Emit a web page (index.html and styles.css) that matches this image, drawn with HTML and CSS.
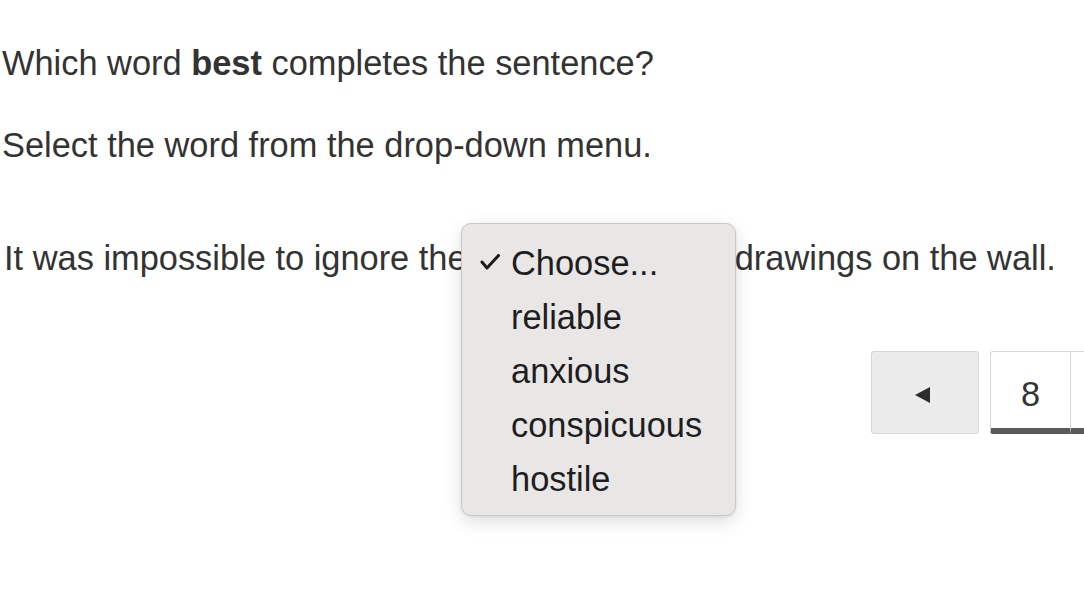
FILE: index.html
```html
<!DOCTYPE html>
<html lang="en">
<head>
<meta charset="utf-8">
<title>Question</title>
<link rel="stylesheet" href="styles.css">
</head>
<body>
<main class="page">
  <p class="line prompt">Which word <b>best</b> completes the sentence?</p>
  <p class="line instruction">Select the word from the drop-down menu.</p>
  <p class="line sentence">It was impossible to ignore the <span class="slot"></span> drawings on the wall.<span class="menu" role="listbox">
      <span class="opt selected"><svg class="check" width="20" height="16" viewBox="0 0 20 16"><path d="M2 8 L7 14 L18.5 1.5" fill="none" stroke="#1a1a1a" stroke-width="3" stroke-linecap="round" stroke-linejoin="round"/></svg>Choose...</span>
      <span class="opt">reliable</span>
      <span class="opt">anxious</span>
      <span class="opt">conspicuous</span>
      <span class="opt">hostile</span>
    </span></p>
  <nav class="pager">
    <button class="prev" type="button" aria-label="Previous"><span class="tri"></span></button>
    <div class="pages">
      <span class="pg current">8</span>
      <span class="pg next" aria-label="9"></span>
    </div>
  </nav>
</main>
</body>
</html>
```

FILE: styles.css
```css
html, body {
  margin: 0;
  padding: 0;
  background: #ffffff;
  overflow: hidden;
}
body {
  width: 1084px;
  height: 616px;
  font-family: "Liberation Sans", Arial, Helvetica, sans-serif;
  color: #333333;
}
.page {
  padding-top: 43px;
}
.line {
  margin: 0;
  font-size: 34.4px;
  line-height: 40px;
  white-space: nowrap;
  padding-left: 2px;
}
.line b {
  font-weight: bold;
}
.instruction {
  margin-top: 42px;
}
.sentence {
  position: relative;
  margin-top: 73px;
  padding-left: 4px;
}
.slot {
  display: inline-block;
  width: 249px;
  height: 0;
}
.menu {
  position: absolute;
  left: 461px;
  top: -15px;
  width: 275px;
  box-sizing: border-box;
  padding: 12px 0 9px 0;
  background: #e8e7e6;
  border: 1px solid #c9c8c7;
  border-radius: 10px;
  box-shadow: 0 6px 18px rgba(0, 0, 0, 0.13), 0 1px 3px rgba(0, 0, 0, 0.08);
  display: flex;
  flex-direction: column;
  z-index: 2;
}
.opt {
  position: relative;
  display: block;
  height: 54px;
  line-height: 54px;
  padding-left: 49px;
  font-size: 34.4px;
  color: #1e1e1e;
}
.check {
  position: absolute;
  left: 18px;
  top: 18px;
}
.pager {
  display: flex;
  margin-top: 73px;
  padding-left: 871px;
  gap: 11px;
}
.prev {
  flex-shrink: 0;
  width: 108px;
  height: 83px;
  box-sizing: border-box;
  background: #ebebeb;
  border: 1px solid #d6d6d6;
  border-radius: 3px;
  padding: 0;
  display: flex;
  align-items: center;
  justify-content: center;
}
.tri {
  width: 0;
  height: 0;
  border-top: 8px solid transparent;
  border-bottom: 8px solid transparent;
  border-right: 15px solid #2d2d2d;
  margin-right: 6px;
  margin-top: 4px;
}
.pages {
  display: flex;
  flex-shrink: 0;
}
.pg {
  flex-shrink: 0;
  width: 80px;
  height: 83px;
  box-sizing: border-box;
  border: 1px solid #d9d9d9;
  border-bottom: 6px solid #5a5a5a;
  padding-top: 8px;
  display: flex;
  align-items: center;
  justify-content: center;
  font-size: 34.4px;
  color: #333333;
  background: #ffffff;
}
.pg.current {
  border-radius: 3px 0 0 3px;
  border-right: none;
}
```
